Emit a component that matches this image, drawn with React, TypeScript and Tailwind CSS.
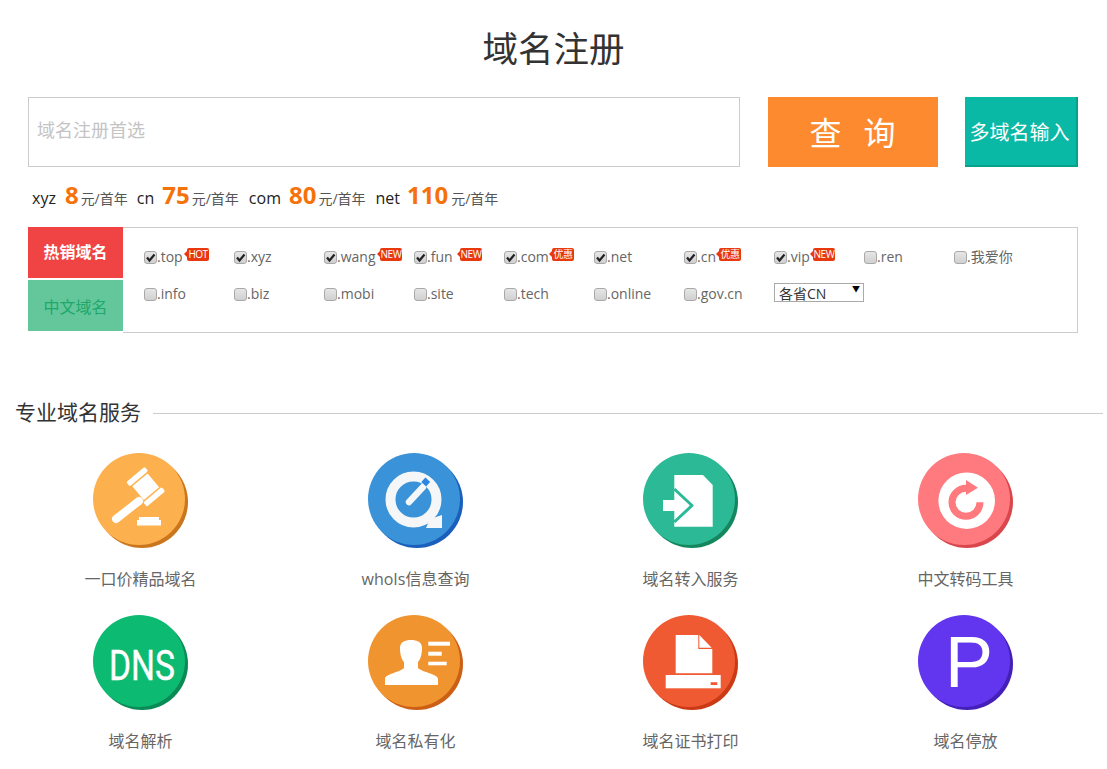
const suffixes = [
  { name: '.top', checked: true, badge: 'HOT', pos: 'left-[43px]' },
  { name: '.xyz', checked: true },
  { name: '.wang', checked: true, badge: 'NEW', pos: 'left-[56px]' },
  { name: '.fun', checked: true, badge: 'NEW', pos: 'left-[46px]' },
  { name: '.com', checked: true, badge: '优惠', pos: 'left-[48px]' },
  { name: '.net', checked: true },
  { name: '.cn', checked: true, badge: '优惠', pos: 'left-[35px]' },
  { name: '.vip', checked: true, badge: 'NEW', pos: 'left-[39px]' },
  { name: '.ren' },
  { name: '.我爱你' },
  { name: '.info' },
  { name: '.biz' },
  { name: '.mobi' },
  { name: '.site' },
  { name: '.tech' },
  { name: '.online' },
  { name: '.gov.cn' },
]

const prices = [
  { tld: 'xyz', price: '8', gap: 'ml-[9px] mr-[2px]', after: 'mr-[9px]' },
  { tld: 'cn', price: '75', gap: 'ml-2 mr-[2px]', after: 'mr-[10px]' },
  { tld: 'com', price: '80', gap: 'ml-2 mr-[2px]', after: 'mr-[10px]' },
  { tld: 'net', price: '110', gap: 'ml-[7px] mr-[3px]', after: '' },
]

function GavelIcon() {
  return (
    <g fill="#fff">
      <g transform="translate(52.7 33.7) rotate(-40)">
        <rect x="-10" y="-9" width="20" height="18" />
        <rect x="-12" y="-16" width="24" height="5.5" rx="1.5" />
        <rect x="-12" y="10.5" width="24" height="5.5" rx="1.5" />
      </g>
      <line x1="23" y1="66" x2="46" y2="48" stroke="#fff" strokeWidth="8" strokeLinecap="round" />
      <rect x="46" y="64" width="20" height="3" />
      <rect x="44" y="67" width="24" height="5.5" />
    </g>
  )
}

function QuickTimeIcon() {
  return (
    <g>
      <circle cx="45.5" cy="46.5" r="23" fill="none" stroke="#f4f6f8" strokeWidth="10" />
      <path d="M62 66 L74 62 V75 H58 Z" fill="#f4f6f8" />
      <line x1="41" y1="49" x2="55" y2="34" stroke="#f4f6f8" strokeWidth="6.5" strokeLinecap="round" />
      <rect x="54.5" y="26" width="6.5" height="6" fill="#2a86e0" transform="rotate(43 57.7 29)" />
    </g>
  )
}

function TransferIcon() {
  return (
    <g>
      <path d="M31.3 22 H60 L69.7 32 V73.7 H31.3 Z" fill="#fff" />
      <rect x="20" y="47" width="13" height="11" fill="#fff" />
      <path d="M31.3 36 L49 52.5 L31.3 69" fill="none" stroke="#2bb996" strokeWidth="3" strokeLinejoin="round" />
    </g>
  )
}

function RefreshIcon() {
  return (
    <g>
      <circle cx="48.7" cy="47.7" r="28.3" fill="#fff" />
      <path d="M48 35.3 A14 14 0 1 0 62 49.3" fill="none" stroke="#ff7a7f" strokeWidth="7" />
      <path d="M48 27 L60 34.7 L48 42 Z" fill="#ff7a7f" />
    </g>
  )
}

function DnsIcon() {
  return (
    <text x="16" y="65" fill="#fff" fontSize="43" fontFamily="Roboto, sans-serif" stroke="#fff" strokeWidth="0.4" textLength="66" lengthAdjust="spacingAndGlyphs">
      DNS
    </text>
  )
}

function PersonIcon() {
  return (
    <g fill="#fff">
      <path d="M17 70 V64 C17 59 30 58 36 53 V47 C33 44 32 38 32 33 C32 27 37 25 43 25 C49 25 54 27 54 33 C54 38 53 44 50 47 V53 C56 58 70 59 70 64 V70 Z" />
      <rect x="60.3" y="26.7" width="21.7" height="4" />
      <rect x="60.3" y="36.7" width="13.4" height="4" />
      <rect x="60.3" y="46.7" width="18.4" height="3.6" />
    </g>
  )
}

function PrinterIcon() {
  return (
    <g fill="#fff">
      <path d="M32.7 20 H55.3 V34 H69.3 V58.3 H32.7 Z" />
      <path d="M56.3 20 L68.7 32.7 H56.3 Z" />
      <rect x="22.7" y="60" width="55" height="13.3" />
      <rect x="67.7" y="67.2" width="6.6" height="2.8" fill="#f05a33" />
    </g>
  )
}

function ParkingIcon() {
  return (
    <text x="27" y="71.7" fill="#fff" fontSize="72" fontFamily="'Liberation Sans', sans-serif">
      P
    </text>
  )
}

const services = [
  { label: '一口价精品域名', disc: 'bg-[#fdb04e] shadow-[3px_3px_0_#c9761c]', icon: <GavelIcon /> },
  { label: 'whoIs信息查询', disc: 'bg-[#3a92d8] shadow-[3px_3px_0_#1a5fbb]', icon: <QuickTimeIcon /> },
  { label: '域名转入服务', disc: 'bg-[#2bb996] shadow-[3px_3px_0_#14875f]', icon: <TransferIcon /> },
  { label: '中文转码工具', disc: 'bg-[#ff7a7f] shadow-[3px_3px_0_#d9474c]', icon: <RefreshIcon /> },
  { label: '域名解析', disc: 'bg-[#0dba72] shadow-[3px_3px_0_#0a8a55]', icon: <DnsIcon /> },
  { label: '域名私有化', disc: 'bg-[#f09430] shadow-[3px_3px_0_#cc5f14]', icon: <PersonIcon /> },
  { label: '域名证书打印', disc: 'bg-[#f05a33] shadow-[3px_3px_0_#c93a15]', icon: <PrinterIcon /> },
  { label: '域名停放', disc: 'bg-[#6236ee] shadow-[3px_3px_0_#4420b8]', icon: <ParkingIcon /> },
]

function Checkbox({ checked }: { checked?: boolean }) {
  return (
    <span className="relative block w-[13px] h-[13px] shrink-0 rounded-[3px] border border-[#a9a9a9] bg-gradient-to-b from-[#e6e6e6] to-[#d0d0d0]">
      {checked && (
        <svg viewBox="0 0 13 13" className="absolute -left-px -top-px w-[13px] h-[13px]">
          <path d="M3 6.5 L5.5 9.5 L10.5 3.5" fill="none" stroke="#222" strokeWidth="2.2" />
        </svg>
      )}
    </span>
  )
}

function Badge({ text, pos }: { text: string; pos?: string }) {
  return (
    <span className={`absolute ${pos} top-[9px] w-[22px] h-[13px] rounded-[2px] bg-[#e8390e] text-white text-[10px] leading-[13px] text-center whitespace-nowrap tracking-[-0.5px]`}>
      <span className="absolute -left-[3px] top-[3px] w-0 h-0 border-y-[3px] border-y-transparent border-r-[3px] border-r-[#e8390e]" />
      {text}
    </span>
  )
}

export default function App() {
  return (
    <div className="w-[1107px] h-[769px] overflow-hidden bg-white font-['Open_Sans','Noto_Sans_CJK_SC',sans-serif]">
      <h1 className="h-[97px] pt-[22px] text-center text-[35.5px] leading-[52px] text-[#333]">域名注册</h1>

      <div className="flex pl-[28px] h-[70px]">
        <input
          placeholder="域名注册首选"
          className="w-[712px] h-full border border-[#ccc] px-2 pb-1 text-[18px] outline-none placeholder:text-[#c4c4c4]"
        />
        <button className="w-[170px] h-full ml-[28px] pt-[2px] bg-[#fd8a2f] text-white text-[32px] tracking-[22px] pl-[21px]">查询</button>
        <button className="w-[113px] h-full ml-[27px] pt-1 pr-[2px] bg-[#09b8a5] border-r-2 border-b-2 border-[#07a08f] text-white text-[20px] whitespace-nowrap">多域名输入</button>
      </div>

      <div className="flex items-baseline h-[60px] pl-[32px] pt-[10px] text-[16px] text-[#222]">
        {prices.map(p => (
          <span key={p.tld} className={p.after}>
            {p.tld}
            <b className={`${p.gap} text-[24px] text-[#f5720a]`}>{p.price}</b>
            <span className="text-[14px] text-[#555]">元/首年</span>
          </span>
        ))}
      </div>

      <div className="flex ml-[28px] w-[1050px] h-[106px]">
        <div className="w-[95px] shrink-0 text-[16px] text-center">
          <div className="h-[51px] leading-[51px] bg-[#f04343] text-white font-bold">热销域名</div>
          <div className="h-[51px] mt-[2px] leading-[54px] bg-[#63c79b] text-[#20a86c]">中文域名</div>
        </div>
        <div className="flex-1 border border-l-0 border-[#ccc] pl-[21px] pt-[11px]">
          <div className="grid grid-cols-[repeat(10,90px)] auto-rows-[37px] text-[14px] text-[#666]">
            {suffixes.map(s => (
              <label key={s.name} className="relative flex items-center h-[37px] whitespace-nowrap">
                <Checkbox checked={s.checked} />
                <span className="-mt-[3px]">{s.name}</span>
                {s.badge && <Badge text={s.badge} pos={s.pos} />}
              </label>
            ))}
            <div className="relative flex items-center h-[37px]">
              <select className="w-[90px] h-[19px] -mt-1 border border-[#aaa] appearance-none pl-1 pt-[2px] text-[14px] leading-[15px] text-[#333] bg-white outline-none">
                <option>各省CN</option>
              </select>
              <span className="absolute left-[78px] top-[6px] text-[8px] leading-[14px] text-black">▼</span>
            </div>
          </div>
        </div>
      </div>

      <div className="flex items-center pl-[15px] pr-[4px] mt-[66px] h-[28px]">
        <h2 className="-mt-[2px] text-[21px] leading-[28px] text-[#333]">专业域名服务</h2>
        <div className="flex-1 h-px mt-[1px] ml-3 bg-[#ccc]" />
      </div>

      <div className="grid grid-cols-[repeat(4,275px)] auto-rows-[162px] ml-[3px] mt-[26px]">
        {services.map(s => (
          <div key={s.label} className="flex flex-col items-center">
            <div className="w-[95px] h-[95px]">
              <div className={`w-[92px] h-[92px] rounded-full ${s.disc}`}>
                <svg viewBox="0 0 95 95" className="w-[95px] h-[95px] max-w-none overflow-visible">{s.icon}</svg>
              </div>
            </div>
            <div className="mt-[20px] text-[16px] leading-[22px] text-[#666]">{s.label}</div>
          </div>
        ))}
      </div>
    </div>
  )
}
